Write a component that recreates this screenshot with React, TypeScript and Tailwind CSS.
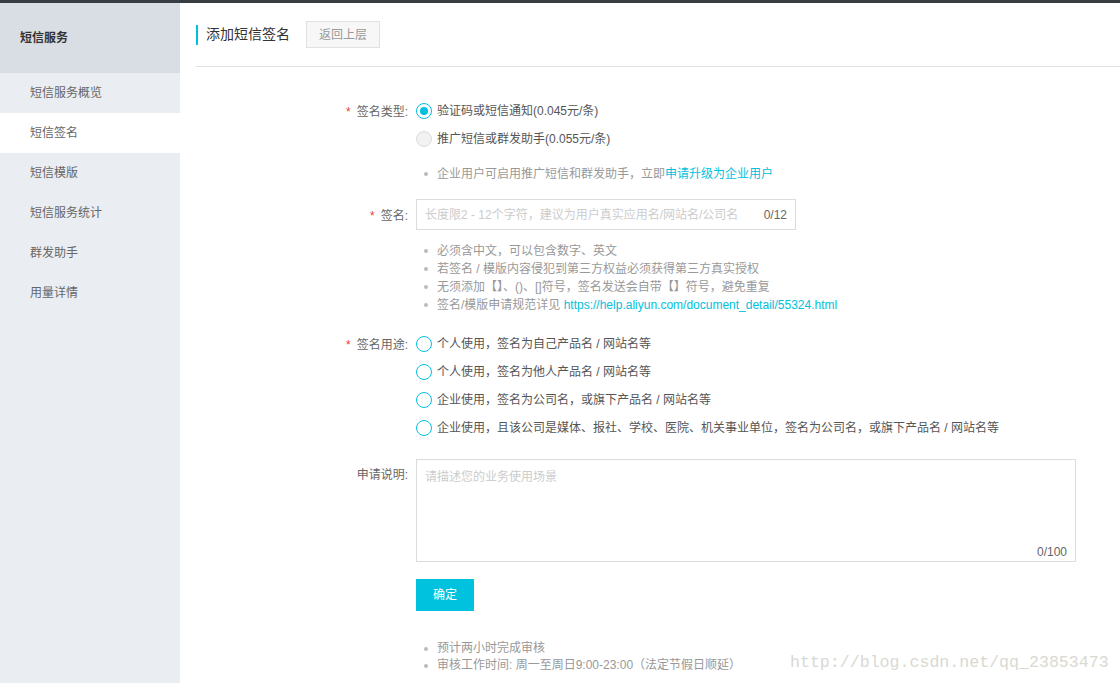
const font = "font-['Liberation_Sans','Noto_Sans_CJK_SC',sans-serif]";

const menu = ["短信服务概览", "短信签名", "短信模版", "短信服务统计", "群发助手", "用量详情"];

function Radio({ state }: { state: "on" | "off" | "disabled" }) {
  if (state === "on")
    return (
      <span className="w-4 h-4 rounded-full border-[1.5px] border-[#00c1de] flex items-center justify-center shrink-0">
        <span className="w-2 h-2 rounded-full bg-[#00c1de]" />
      </span>
    );
  if (state === "disabled")
    return <span className="w-4 h-4 rounded-full border border-[#dcdcdc] bg-[#f2f2f2] shrink-0" />;
  return <span className="w-4 h-4 rounded-full border-[1.5px] border-[#00c1de] shrink-0" />;
}

function Label({ text, required }: { text: string; required?: boolean }) {
  return (
    <div className="w-[220px] shrink-0 flex justify-end pr-2 text-[12px] text-[#666]">
      {required && <span className="text-[#e0452f] mr-[6px]">*</span>}
      <span>{text}:</span>
    </div>
  );
}

function Bullet({ children }: { children: React.ReactNode }) {
  return (
    <li className="flex items-center text-[12px] text-[#999] leading-[18px]">
      <span className="w-[4px] h-[4px] rounded-full bg-[#bbb] ml-[8px] mr-[9px]" />
      <span>{children}</span>
    </li>
  );
}

export default function App() {
  return (
    <div className={`w-[1120px] h-[683px] flex flex-col bg-white overflow-hidden relative ${font}`}>
      <div className="h-[3px] bg-[#373d41]" />
      <div className="flex flex-1">
        <aside className="w-[180px] bg-[#eaedf1] flex flex-col">
          <div className="h-[70px] bg-[#d9dee4] flex items-center pl-5 text-[12px] font-bold text-[#333]">短信服务</div>
          {menu.map((m) => (
            <div
              key={m}
              className={`h-10 flex items-center pl-[30px] text-[12px] text-[#666] ${m === "短信签名" ? "bg-white" : ""}`}
            >
              {m}
            </div>
          ))}
        </aside>

        <main className="flex-1 pl-4">
          <div className="h-[64px] border-b border-[#e1e1e1] flex items-center">
            <div className="border-l-2 border-[#00c1de] h-5 flex items-center pl-2 text-[14px] text-[#333]">添加短信签名</div>
            <button className="ml-4 h-[27px] px-3 bg-[#f7f7f7] border border-[#e1e1e1] text-[12px] text-[#999]">返回上层</button>
          </div>

          <div className="pt-[30px] flex flex-col">
            <div className="flex">
              <div className="pt-[6px]"><Label text="签名类型" required /></div>
              <div className="flex flex-col">
                <div className="h-7 flex items-center gap-[5px] text-[12px] text-[#555]">
                  <Radio state="on" />
                  <span>验证码或短信通知(0.045元/条)</span>
                </div>
                <div className="h-7 flex items-center gap-[5px] text-[12px] text-[#555]">
                  <Radio state="disabled" />
                  <span>推广短信或群发助手(0.055元/条)</span>
                </div>
                <ul className="mt-[12px]">
                  <Bullet>
                    企业用户可启用推广短信和群发助手，立即<span className="text-[#00c1de]">申请升级为企业用户</span>
                  </Bullet>
                </ul>
              </div>
            </div>

            <div className="flex mt-[16px]">
              <div className="pt-[8px]"><Label text="签名" required /></div>
              <div className="flex flex-col">
                <div className="w-[380px] h-[31px] border border-[#dcdcdc] flex items-center px-2 text-[12px]">
                  <span className="flex-1 text-[#ccc] whitespace-nowrap overflow-hidden">长度限2 - 12个字符，建议为用户真实应用名/网站名/公司名</span>
                  <span className="ml-3 text-[#666]">0/12</span>
                </div>
                <ul className="mt-[12px]">
                  <Bullet>必须含中文，可以包含数字、英文</Bullet>
                  <Bullet>若签名 / 模版内容侵犯到第三方权益必须获得第三方真实授权</Bullet>
                  <Bullet>无须添加【】、()、[]符号，签名发送会自带【】符号，避免重复</Bullet>
                  <Bullet>
                    签名/模版申请规范详见 <span className="text-[#00c1de]">https://help.aliyun.com/document_detail/55324.html</span>
                  </Bullet>
                </ul>
              </div>
            </div>

            <div className="flex mt-4">
              <div className="pt-[6px]"><Label text="签名用途" required /></div>
              <div className="flex flex-col text-[12px] text-[#555]">
                {[
                  "个人使用，签名为自己产品名 / 网站名等",
                  "个人使用，签名为他人产品名 / 网站名等",
                  "企业使用，签名为公司名，或旗下产品名 / 网站名等",
                  "企业使用，且该公司是媒体、报社、学校、医院、机关事业单位，签名为公司名，或旗下产品名 / 网站名等",
                ].map((t) => (
                  <div key={t} className="h-7 flex items-center gap-[5px]">
                    <Radio state="off" />
                    <span>{t}</span>
                  </div>
                ))}
              </div>
            </div>

            <div className="flex mt-[17px]">
              <div className="pt-[7px]"><Label text="申请说明" /></div>
              <div className="flex flex-col">
                <div className="w-[660px] h-[103px] border border-[#dcdcdc] flex flex-col justify-between px-2 pt-[8px] pb-0 text-[12px]">
                  <span className="text-[#ccc]">请描述您的业务使用场景</span>
                  <span className="self-end text-[#666]">0/100</span>
                </div>
                <button className="mt-[17px] w-[58px] h-8 bg-[#00c1de] text-white text-[12px]">确定</button>
                <ul className="mt-[29px]">
                  <li className="flex items-center text-[12px] text-[#999] leading-[17px]">
                    <span className="w-[4px] h-[4px] rounded-full bg-[#bbb] ml-[8px] mr-[9px]" />
                    预计两小时完成审核
                  </li>
                  <li className="flex items-center text-[12px] text-[#999] leading-[17px]">
                    <span className="w-[4px] h-[4px] rounded-full bg-[#bbb] ml-[8px] mr-[9px]" />
                    审核工作时间: 周一至周日9:00-23:00（法定节假日顺延）
                  </li>
                </ul>
              </div>
            </div>
          </div>
        </main>
      </div>
      <div className="absolute left-[790px] top-[651px] font-['Liberation_Mono',monospace] text-[16.6px] text-[#d9d9d2] leading-6 whitespace-nowrap">
        http://blog.csdn.net/qq_23853473
      </div>
    </div>
  );
}
